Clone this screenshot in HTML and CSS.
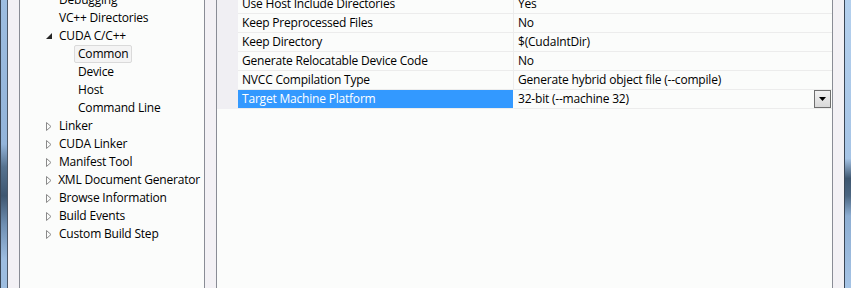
FILE: index.html
```html
<!DOCTYPE html>
<html lang="en">

<head>
  <meta charset="UTF-8">
  <title>Property Pages</title>
  <link rel="stylesheet" href="styles.css">
</head>

<body>

  <div class="window">
    <div class="frame frame-left"></div>
    <div class="gap"></div>

    <!-- configuration tree -->
    <div class="panel tree-panel">
      <ul class="tree">
        <li class="node"><span class="twisty"></span><span class="label">Debugging</span></li>
        <li class="node"><span class="twisty"></span><span class="label">VC++ Directories</span></li>
        <li class="node">
          <span class="twisty">
            <svg width="6" height="6" viewBox="0 0 6 6"><polygon points="6,0 6,6 0,6" fill="#262626"/></svg>
          </span>
          <span class="label">CUDA C/C++</span>
        </li>
        <li class="node child"><span class="label selected">Common</span></li>
        <li class="node child"><span class="label">Device</span></li>
        <li class="node child"><span class="label">Host</span></li>
        <li class="node child"><span class="label">Command Line</span></li>
        <li class="node"><span class="twisty"><svg width="6" height="9" viewBox="0 0 6 9"><polygon points="0.5,0.5 5,4.5 0.5,8.5" fill="none" stroke="#8a8a8a"/></svg></span><span class="label">Linker</span></li>
        <li class="node"><span class="twisty"><svg width="6" height="9" viewBox="0 0 6 9"><polygon points="0.5,0.5 5,4.5 0.5,8.5" fill="none" stroke="#8a8a8a"/></svg></span><span class="label">CUDA Linker</span></li>
        <li class="node"><span class="twisty"><svg width="6" height="9" viewBox="0 0 6 9"><polygon points="0.5,0.5 5,4.5 0.5,8.5" fill="none" stroke="#8a8a8a"/></svg></span><span class="label">Manifest Tool</span></li>
        <li class="node"><span class="twisty"><svg width="6" height="9" viewBox="0 0 6 9"><polygon points="0.5,0.5 5,4.5 0.5,8.5" fill="none" stroke="#8a8a8a"/></svg></span><span class="label">XML Document Generator</span></li>
        <li class="node"><span class="twisty"><svg width="6" height="9" viewBox="0 0 6 9"><polygon points="0.5,0.5 5,4.5 0.5,8.5" fill="none" stroke="#8a8a8a"/></svg></span><span class="label">Browse Information</span></li>
        <li class="node"><span class="twisty"><svg width="6" height="9" viewBox="0 0 6 9"><polygon points="0.5,0.5 5,4.5 0.5,8.5" fill="none" stroke="#8a8a8a"/></svg></span><span class="label">Build Events</span></li>
        <li class="node"><span class="twisty"><svg width="6" height="9" viewBox="0 0 6 9"><polygon points="0.5,0.5 5,4.5 0.5,8.5" fill="none" stroke="#8a8a8a"/></svg></span><span class="label">Custom Build Step</span></li>
      </ul>
    </div>

    <div class="gap"></div>

    <!-- property grid -->
    <div class="panel grid-panel">
      <div class="props">
        <div class="prop-row">
          <div class="gutter"></div>
          <div class="prop-name">Use Host Include Directories</div>
          <div class="prop-value">Yes</div>
        </div>
        <div class="prop-row">
          <div class="gutter"></div>
          <div class="prop-name">Keep Preprocessed Files</div>
          <div class="prop-value">No</div>
        </div>
        <div class="prop-row">
          <div class="gutter"></div>
          <div class="prop-name">Keep Directory</div>
          <div class="prop-value">$(CudaIntDir)</div>
        </div>
        <div class="prop-row">
          <div class="gutter"></div>
          <div class="prop-name">Generate Relocatable Device Code</div>
          <div class="prop-value">No</div>
        </div>
        <div class="prop-row">
          <div class="gutter"></div>
          <div class="prop-name">NVCC Compilation Type</div>
          <div class="prop-value">Generate hybrid object file (--compile)</div>
        </div>
        <div class="prop-row active">
          <div class="gutter"></div>
          <div class="prop-name">Target Machine Platform</div>
          <div class="prop-value">
            <span>32-bit (--machine 32)</span>
            <span class="drop-btn">
              <svg width="7" height="4" viewBox="0 0 7 4"><polygon points="0,0 7,0 3.5,4" fill="#000"/></svg>
            </span>
          </div>
        </div>
      </div>
    </div>

    <div class="gap"></div>
    <div class="frame frame-right"></div>
  </div>

</body>

</html>
```

FILE: styles.css
```css
* {
  margin: 0;
  padding: 0;
  box-sizing: border-box;
}

body {
  font-family: "Open Sans", "Noto Sans", sans-serif;
  font-size: 12px;
  letter-spacing: -0.2px;
  color: #000;
  background-color: #f3f1f5;
  overflow: hidden;
}

.window {
  display: flex;
  height: 288px;
  width: 851px;
}

/* glass frame */
.frame {
  border-left: 1px solid #3a4656;
  border-right: 1px solid #4a5666;
  background: linear-gradient(to bottom, #9dbde0 0%, #93b4da 50%, #56728f 58%, #3e5670 68%, #6f8fb2 78%, #9dbde0 90%, #9dbde0 100%);
}

.frame-left {
  width: 8px;
}

.frame-right {
  width: 7px;
  border-right: none;
  background: linear-gradient(to bottom, #b4d0ee 0%, #a6c4e6 55%, #3e5670 62%, #4c6682 68%, #8eaed3 75%, #a6c4e6 100%);
}

.gap {
  width: 11px;
  background-color: #f3f1f5;
}

.panel {
  border-left: 1px solid #898c95;
  border-right: 1px solid #898c95;
  background-color: #fbfcfb;
  overflow: hidden;
}

.tree-panel {
  width: 186px;
}

.grid-panel {
  width: 617px;
}

/* tree */
.tree {
  list-style: none;
  margin-top: -9px;
}

.node {
  display: flex;
  align-items: center;
  height: 18px;
  padding-left: 26px;
  white-space: nowrap;
}

.node.child {
  padding-left: 54px;
}

.twisty {
  width: 9px;
  display: flex;
  align-items: center;
}

.label {
  line-height: 16px;
  padding: 0 3px;
  border: 1px solid transparent;
  border-radius: 2px;
}

.label.selected {
  background-color: #f4f4f4;
  border-color: #dadada;
}

/* property grid */
.props {
  margin-top: -5px;
}

.prop-row {
  display: flex;
  height: 19px;
}

.gutter {
  width: 21px;
  background-color: #f0eff3;
}

.prop-name,
.prop-value {
  line-height: 18px;
  border-bottom: 1px solid #ececec;
  padding-left: 4px;
  white-space: nowrap;
}

.prop-name {
  width: 276px;
  border-right: 1px solid #ececec;
}

.prop-value {
  flex: 1;
  display: flex;
  justify-content: space-between;
  align-items: center;
  padding-right: 1px;
}

.prop-row.active .prop-name {
  background-color: #3399ff;
  color: #fff;
  border-right-color: #fbfcfb;
}

.drop-btn {
  width: 17px;
  height: 18px;
  border: 1px solid #6f6f6f;
  background: linear-gradient(to bottom, #f2f2f2, #d9d9d9);
  display: flex;
  align-items: center;
  justify-content: center;
}
```
